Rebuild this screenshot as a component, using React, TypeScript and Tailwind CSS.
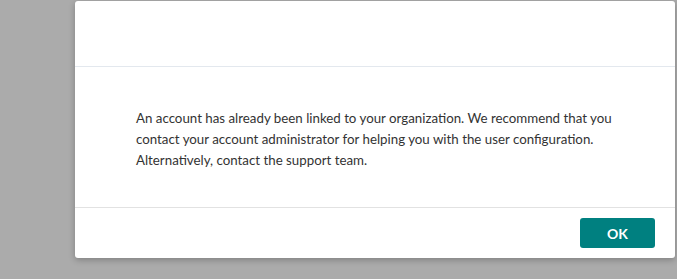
export default function App() {
  return (
    <div className="h-[279px] w-full overflow-hidden bg-[#ababab] pt-px pl-[75px]">
      <div
        className="flex h-[257px] w-[600px] flex-col rounded-[3px] bg-white shadow-[0_2px_6px_rgba(0,0,0,0.25)]"
        style={{ fontFamily: 'Lato, sans-serif' }}
      >
        {/* Header */}
        <div className="h-[66px] border-b border-[#e3e8ee]" />

        {/* Body */}
        <div className="flex h-[141px] items-center border-b border-[#e2e2e2] pt-[4px] pr-[48px] pl-[61px]">
          <p className="text-[13.3px] leading-[21px] text-[#333]">
            An account has already been linked to your organization. We recommend that you contact
            your account administrator for helping you with the user configuration. Alternatively,
            contact the support team.
          </p>
        </div>

        {/* Footer */}
        <div className="flex flex-1 items-start justify-end pt-[10px] pr-[20px]">
          <button className="h-[30px] w-[75px] rounded-[3px] bg-[#008080] text-[14px] font-bold text-white">
            OK
          </button>
        </div>
      </div>
    </div>
  );
}
